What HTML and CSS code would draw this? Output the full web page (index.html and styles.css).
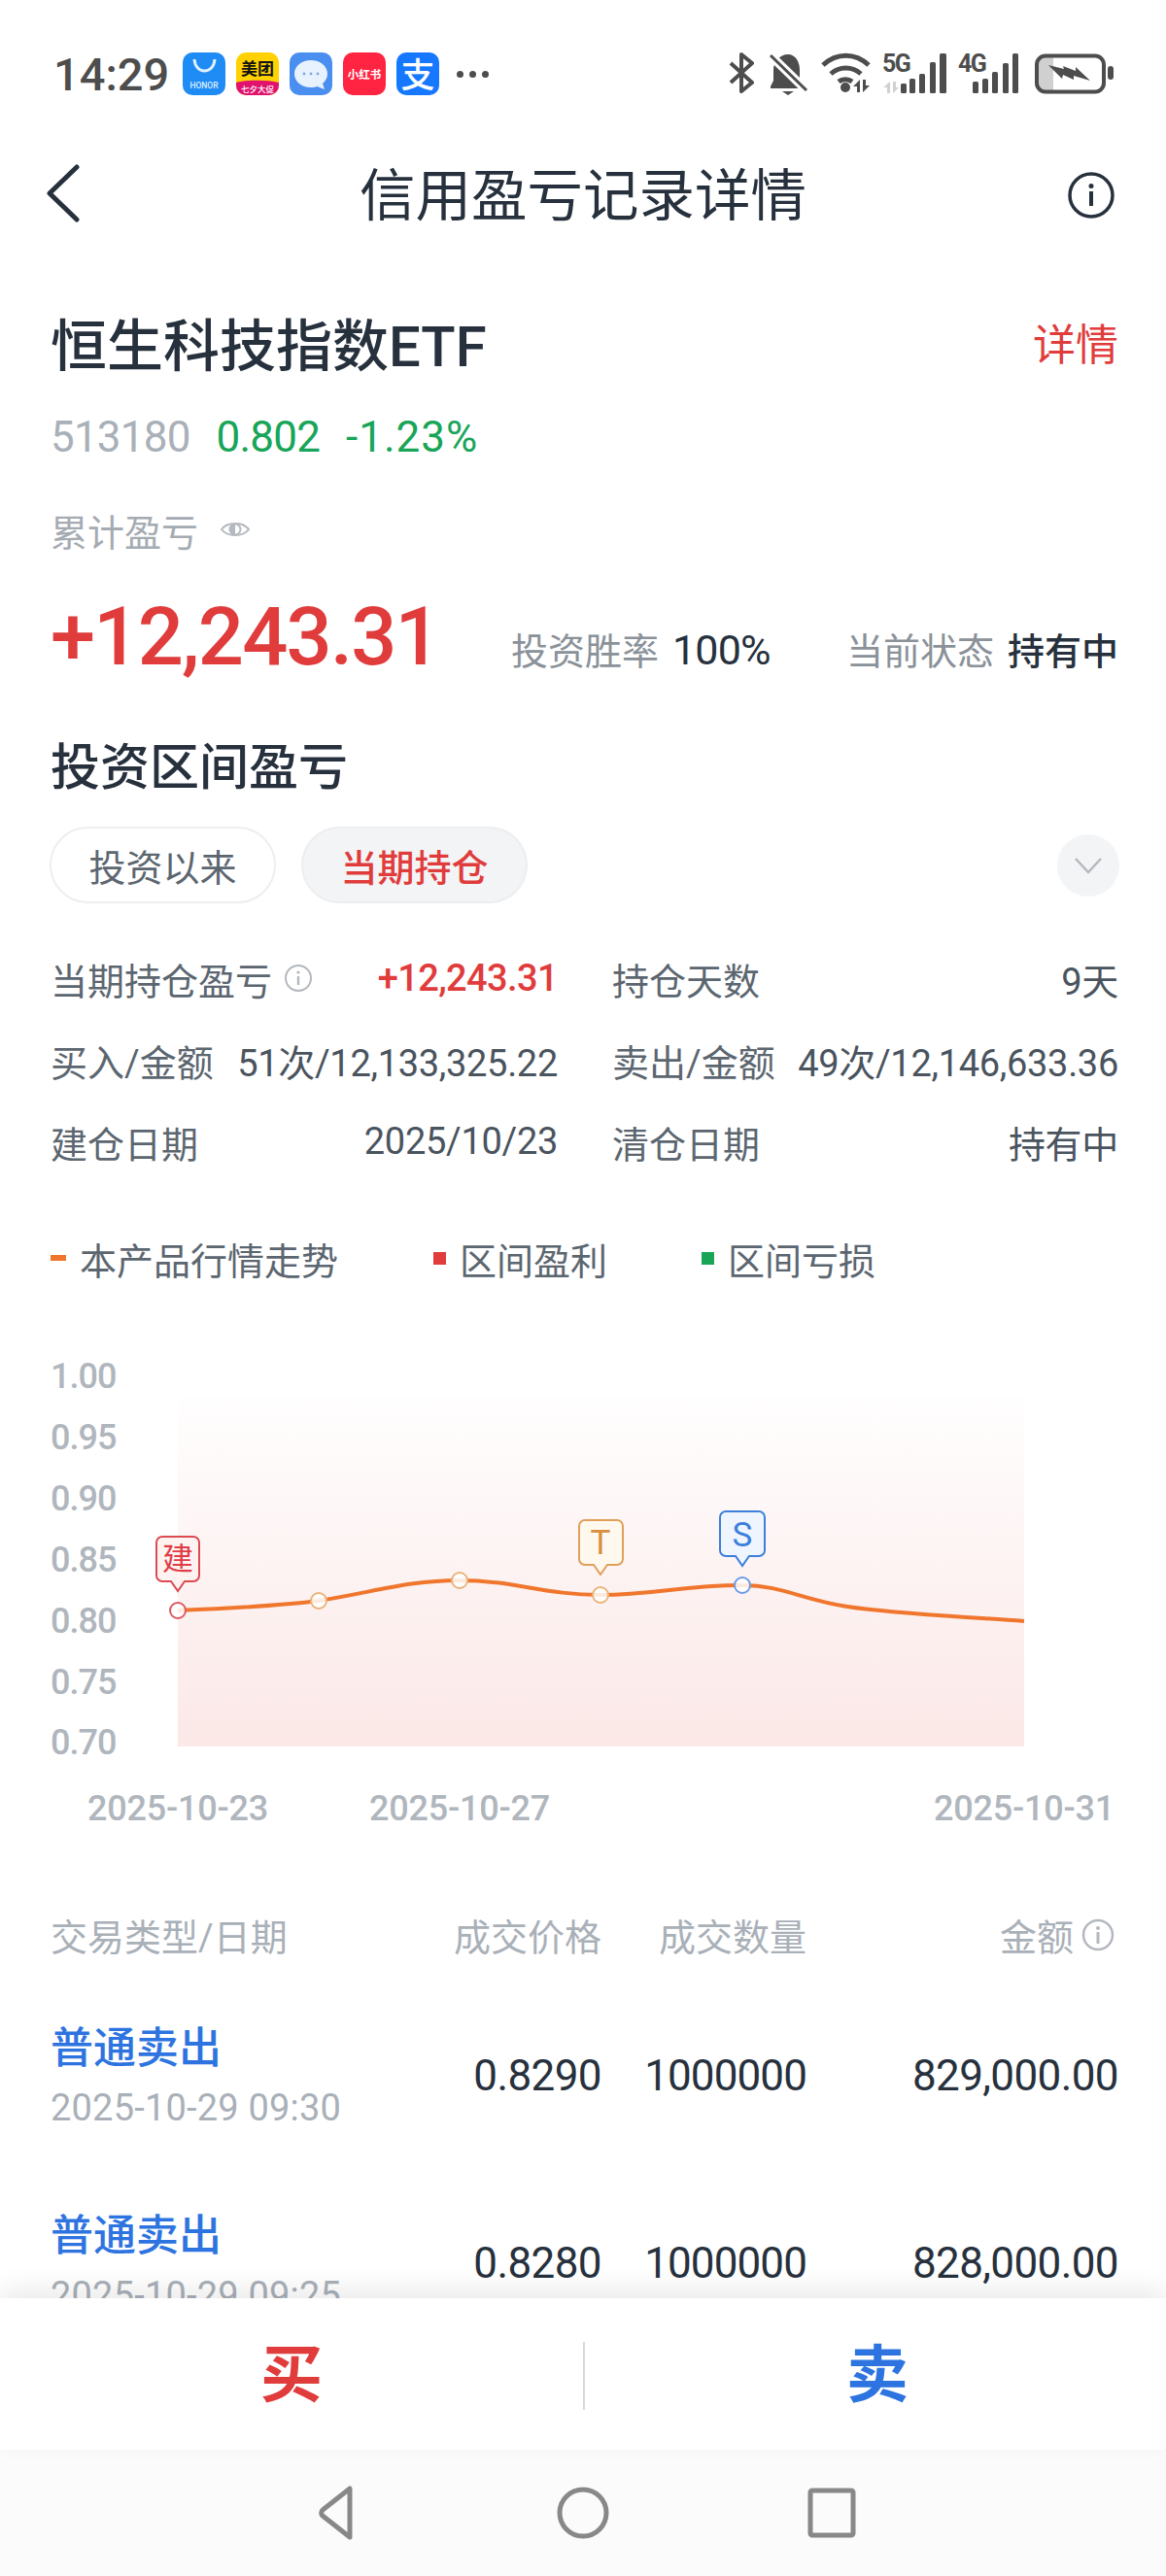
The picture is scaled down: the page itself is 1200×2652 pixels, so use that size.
FILE: index.html
```html
<!DOCTYPE html>
<html>
<head>
    <title>信用盈亏记录详情</title>
    <meta name="viewport" content="width=device-width, initial-scale=1.0">
    <link rel="stylesheet" href="styles.css">
</head>
<body>
    <div class="statusbar">
        <span class="time">14:29</span>
        <div class="apps">
            <svg class="app" viewBox="0 0 44 44">
                <rect width="44" height="44" rx="10" fill="#1f8bf5"/>
                <path d="M12 7c1 16 20 16 21 0" fill="none" stroke="#dff0ff" stroke-width="3"/>
                <text x="22" y="37" class="app-tiny" fill="#dff0ff" text-anchor="middle">HONOR</text>
            </svg>
            <svg class="app" viewBox="0 0 44 44">
                <rect width="44" height="44" rx="10" fill="#ffd100"/>
                <path d="M0 31c12-3 32-3 44 0v3a10 10 0 0 1-10 10H10A10 10 0 0 1 0 34z" fill="#e0126e"/>
                <text x="22" y="23" class="app-label" fill="#111" text-anchor="middle">美团</text>
                <text x="22" y="41" class="app-tiny" fill="#fff" text-anchor="middle">七夕大促</text>
            </svg>
            <svg class="app" viewBox="0 0 44 44">
                <rect width="44" height="44" rx="10" fill="#4a8ef0"/>
                <path d="M22 8c9.500 0 17 6 17 14 0 4-2 7.500-5 10l2 6-7.500-3c-2 .6-4 1-6.500 1C12.500 36 5 30 5 22S12.500 8 22 8z" fill="#e8f2fe"/>
                <circle cx="15" cy="22" r="1.400" fill="#7fa8e4"/>
                <circle cx="22" cy="22" r="1.400" fill="#7fa8e4"/>
                <circle cx="29" cy="22" r="1.400" fill="#7fa8e4"/>
            </svg>
            <svg class="app" viewBox="0 0 44 44">
                <rect width="44" height="44" rx="10" fill="#ff2442"/>
                <text x="22" y="27" class="app-label app-label-small" fill="#fff" text-anchor="middle">小红书</text>
            </svg>
            <svg class="app" viewBox="0 0 44 44">
                <rect width="44" height="44" rx="10" fill="#1677ff"/>
                <text x="22" y="36" class="app-big" fill="#fff" text-anchor="middle">支</text>
            </svg>
        </div>
        <span class="more"><i></i><i></i><i></i></span>
        <svg class="status-icons" viewBox="750 50 402 54">
            <!-- bluetooth -->
            <path d="M755 66l22 20-11 9V57l11 9-22 20" fill="none" stroke="#4d4d4d" stroke-width="4" stroke-linejoin="round"/>
            <!-- bell -->
            <path d="M814 57c8 0 12 8 12 16v11l4 6v2h-34v-2l3-6V73c0-8 6-16 15-16z" fill="#4d4d4d"/>
            <path d="M808 95h12l-6 4z" fill="#4d4d4d"/>
            <path d="M795 57l38 37" stroke="#fff" stroke-width="9"/>
            <path d="M796 58l37 36" stroke="#4d4d4d" stroke-width="3"/>
            <!-- wifi -->
            <path d="M850 68c14-13 33-13 47 0M858 77c9-8 22-8 31 0M866 85c4-3 10-3 14 0" fill="none" stroke="#4d4d4d" stroke-width="5"/>
            <circle cx="873" cy="91" r="5" fill="#4d4d4d"/>
            <path d="M888 83v13h-3v-6h-4zM891 83h3v6h4l-7 7z" fill="#4d4d4d"/>
            <!-- 5G -->
            <text x="911" y="75" class="net-label">5G</text>
            <path d="M919 85v12h-3v-6h-4zM922 85h3v6h3l-6 6z" fill="#d0d0d0"/>
            <g fill="#4d4d4d">
                <rect x="930" y="87" width="6" height="10" rx="1.500"/>
                <rect x="939" y="82" width="6" height="15" rx="1.500"/>
                <rect x="949" y="77" width="6" height="20" rx="1.500"/>
                <rect x="960" y="65" width="6" height="32" rx="1.500"/>
                <rect x="970" y="56" width="7" height="41" rx="1.500"/>
            </g>
            <!-- 4G -->
            <text x="989" y="75" class="net-label">4G</text>
            <g fill="#4d4d4d">
                <rect x="1004" y="85" width="6" height="12" rx="1.500"/>
                <rect x="1014" y="82" width="6" height="15" rx="1.500"/>
                <rect x="1024" y="75" width="6" height="22" rx="1.500"/>
                <rect x="1035" y="66" width="6" height="31" rx="1.500"/>
                <rect x="1045" y="56" width="6" height="41" rx="1.500"/>
            </g>
            <!-- battery -->
            <path d="M1078 59h9v36h-9a7 7 0 0 1-7-7V66a7 7 0 0 1 7-7z" fill="#d0d0d0"/>
            <rect x="1070" y="58.500" width="69" height="37" rx="9" fill="none" stroke="#4d4d4d" stroke-width="4"/>
            <rect x="1143" y="69" width="6" height="14" rx="3" fill="#4d4d4d"/>
            <path d="M1082 68l16 4-1-3 13 5v-4l15 14-17-5v4l-11-5-1 4z" fill="#4d4d4d"/>
        </svg>
    </div>

    <div class="navbar">
        <svg class="nav-back" viewBox="0 0 36 60"><path d="M32 3L4 30l28 27" fill="none" stroke="#27313d" stroke-width="5" stroke-linecap="round" stroke-linejoin="round"/></svg>
        <h1 class="nav-title">信用盈亏记录详情</h1>
        <svg class="nav-info" viewBox="0 0 48 48">
            <circle cx="24" cy="24" r="22" fill="none" stroke="#27313d" stroke-width="3.500"/>
            <circle cx="24" cy="14.500" r="2.500" fill="#27313d"/>
            <rect x="22" y="20" width="4" height="15" fill="#27313d"/>
        </svg>
    </div>

    <div class="main">
        <div class="stock-head">
            <span class="stock-name">恒生科技指数ETF</span>
            <span class="stock-link">详情</span>
        </div>
        <div class="quote">
            <span class="quote-code">513180</span>
            <span class="green">0.802</span>
            <span class="green quote-rate">-1.23%</span>
        </div>
        <div class="total-label">
            累计盈亏
            <svg class="eye" viewBox="0 0 32 22">
                <path d="M2 11C8 3 24 3 30 11 24 19 8 19 2 11z" fill="none" stroke="#b4b9bf" stroke-width="2"/>
                <circle cx="16" cy="11" r="5.500" fill="none" stroke="#b4b9bf" stroke-width="2"/>
                <path d="M16 5.500a5.500 5.500 0 0 0 0 11z" fill="#b4b9bf"/>
            </svg>
        </div>
        <div class="total-row">
            <span class="total-value">+12,243.31</span>
            <span class="total-meta"><em>投资胜率</em><b class="meta-num">100%</b></span>
            <span class="total-meta"><em>当前状态</em><b>持有中</b></span>
        </div>

        <h2 class="section-title">投资区间盈亏</h2>
        <div class="tabs">
            <button class="tab">投资以来</button>
            <button class="tab active">当期持仓</button>
            <span class="tab-more">
                <svg viewBox="0 0 30 18"><path d="M2 2l13 14L28 2" fill="none" stroke="#b4b9bf" stroke-width="2.500"/></svg>
            </span>
        </div>

        <div class="stats">
            <div class="stat">
                <span class="stat-label">当期持仓盈亏
                    <svg class="info-small" viewBox="0 0 30 30">
                        <circle cx="15" cy="15" r="13" fill="none" stroke="#b4b9bf" stroke-width="2"/>
                        <circle cx="15" cy="9" r="1.600" fill="#b4b9bf"/>
                        <rect x="13.800" y="13" width="2.400" height="9" fill="#b4b9bf"/>
                    </svg>
                </span>
                <span class="stat-value red">+12,243.31</span>
            </div>
            <div class="stat"><span class="stat-label">持仓天数</span><span class="stat-value">9天</span></div>
            <div class="stat"><span class="stat-label">买入/金额</span><span class="stat-value">51次/12,133,325.22</span></div>
            <div class="stat"><span class="stat-label">卖出/金额</span><span class="stat-value">49次/12,146,633.36</span></div>
            <div class="stat"><span class="stat-label">建仓日期</span><span class="stat-value">2025/10/23</span></div>
            <div class="stat"><span class="stat-label">清仓日期</span><span class="stat-value">持有中</span></div>
        </div>

        <div class="legend">
            <span class="legend-item legend-line">本产品行情走势</span>
            <span class="legend-item legend-profit">区间盈利</span>
            <span class="legend-item legend-loss">区间亏损</span>
        </div>

        <svg class="chart" viewBox="52 1390 1100 500">
            <defs>
                <linearGradient id="area" x1="0" y1="0" x2="0" y2="1">
                    <stop offset="0" stop-color="#fffefe"/>
                    <stop offset="1" stop-color="#fbe8e7"/>
                </linearGradient>
            </defs>
            <g class="axis-y">
                <text x="52" y="1428">1.00</text>
                <text x="52" y="1491">0.95</text>
                <text x="52" y="1554">0.90</text>
                <text x="52" y="1617">0.85</text>
                <text x="52" y="1680">0.80</text>
                <text x="52" y="1743">0.75</text>
                <text x="52" y="1805">0.70</text>
            </g>
            <rect x="183" y="1437" width="871" height="360" fill="url(#area)"/>
            <path class="trend" d="M183 1657C230 1655 290 1652 328 1647C385 1638 420 1626 473 1626C530 1626 560 1641 618 1641C675 1641 700 1631 764 1631C805 1631 825 1646 872 1653C925 1661 990 1663 1054 1668"/>
            <circle class="dot" cx="183" cy="1657" r="8" stroke="#dc5a60"/>
            <circle class="dot" cx="328" cy="1647" r="8" stroke="#e9b57a"/>
            <circle class="dot" cx="473" cy="1626" r="8" stroke="#e9b57a"/>
            <circle class="dot" cx="618" cy="1641" r="8" stroke="#e9b57a"/>
            <circle class="dot" cx="764" cy="1631" r="8" stroke="#6c9be6"/>

            <path d="M167 1581h32a6 6 0 0 1 6 6v34a6 6 0 0 1-6 6h-9l-7 10-7-10h-9a6 6 0 0 1-6-6v-34a6 6 0 0 1 6-6z" fill="#fff3f2" stroke="#dc4a52" stroke-width="2"/>
            <text x="183" y="1615" class="pin-text" fill="#e03c45">建</text>
            <path d="M602 1564h33a6 6 0 0 1 6 6v34a6 6 0 0 1-6 6h-10l-7 10-7-10h-9a6 6 0 0 1-6-6v-34a6 6 0 0 1 6-6z" fill="#fff8ef" stroke="#e0a05a" stroke-width="2"/>
            <text x="618" y="1599" class="pin-text pin-latin" fill="#d98f3c">T</text>
            <path d="M747 1555h34a6 6 0 0 1 6 6v34a6 6 0 0 1-6 6h-10l-7 10-7-10h-10a6 6 0 0 1-6-6v-34a6 6 0 0 1 6-6z" fill="#eef5ff" stroke="#3c7fdc" stroke-width="2"/>
            <text x="764" y="1591" class="pin-text pin-latin" fill="#3c7fdc">S</text>

            <g class="axis-x">
                <text x="183" y="1873">2025-10-23</text>
                <text x="473" y="1873">2025-10-27</text>
                <text x="1054" y="1873">2025-10-31</text>
            </g>
        </svg>

        <div class="trade-table">
            <div class="trade-head">
                <span>交易类型/日期</span>
                <span class="cell-right">成交价格</span>
                <span class="cell-right">成交数量</span>
                <span class="cell-right cell-amount">金额
                    <svg class="info-amount" viewBox="0 0 34 34">
                        <circle cx="17" cy="17" r="15" fill="none" stroke="#b4b9bf" stroke-width="2.500"/>
                        <circle cx="17" cy="10" r="2" fill="#b4b9bf"/>
                        <rect x="15.500" y="14" width="3" height="12" fill="#b4b9bf"/>
                    </svg>
                </span>
            </div>
            <div class="trade-row">
                <div>
                    <div class="trade-type">普通卖出</div>
                    <div class="trade-date">2025-10-29 09:30</div>
                </div>
                <span class="cell-right">0.8290</span>
                <span class="cell-right cell-qty">1000000</span>
                <span class="cell-right">829,000.00</span>
            </div>
            <div class="trade-row">
                <div>
                    <div class="trade-type">普通卖出</div>
                    <div class="trade-date">2025-10-29 09:25</div>
                </div>
                <span class="cell-right">0.8280</span>
                <span class="cell-right cell-qty">1000000</span>
                <span class="cell-right">828,000.00</span>
            </div>
        </div>
    </div>

    <div class="trade-bar">
        <button class="trade-btn buy">买</button>
        <button class="trade-btn sell">卖</button>
    </div>
    <div class="sysnav">
        <svg viewBox="0 0 60 60"><path d="M52 5v50L24 33a4 4 0 0 1 0-6z" fill="none" stroke="#888" stroke-width="5" stroke-linejoin="round" transform="translate(-6 0)"/></svg>
        <svg viewBox="0 0 60 60"><circle cx="30" cy="30" r="24" fill="none" stroke="#888" stroke-width="5"/></svg>
        <svg viewBox="0 0 60 60"><rect x="8" y="7" width="44" height="46" rx="2" fill="none" stroke="#888" stroke-width="5"/></svg>
    </div>
</body>
</html>
```

FILE: styles.css
```css
* {
    box-sizing: border-box;
}
body {
    margin: 0;
    width: 1200px;
    height: 2652px;
    overflow: hidden;
    display: flex;
    flex-direction: column;
    background-color: #fff;
    color: #27313d;
    font-family: Roboto, "Noto Sans CJK SC", sans-serif;
}
button {
    font-family: inherit;
    border: none;
    background: none;
    padding: 0;
}
em {
    font-style: normal;
}

/* status bar */
.statusbar {
    flex: none;
    height: 152px;
    display: flex;
    align-items: center;
    padding: 0 51px 0 55px;
}
.time {
    width: 133px;
    font-size: 47px;
    font-weight: 500;
    color: #4d4d4d;
}
.apps {
    display: flex;
    gap: 11px;
}
.app {
    width: 44px;
    height: 44px;
}
.app-label {
    font-size: 17px;
    font-weight: 700;
}
.app-label-small {
    font-size: 11.500px;
}
.app-tiny {
    font-size: 8.500px;
    font-weight: 500;
}
.app-big {
    font-size: 35px;
    font-weight: 500;
}
.more {
    display: flex;
    gap: 6px;
    margin-left: 18px;
}
.more i {
    width: 7px;
    height: 7px;
    border-radius: 50%;
    background-color: #4d4d4d;
}
.status-icons {
    width: 402px;
    height: 54px;
    margin-left: auto;
}
.net-label {
    font-size: 25px;
    font-weight: 700;
    letter-spacing: -1.500px;
    fill: #4d4d4d;
}

/* title bar */
.navbar {
    flex: none;
    height: 94px;
    position: relative;
    display: flex;
    align-items: center;
    justify-content: center;
}
.nav-title {
    margin: -4px 0 0;
    font-size: 57.5px;
    font-weight: 400;
}
.nav-back {
    position: absolute;
    left: 47px;
    top: 17px;
    width: 36px;
    height: 60px;
}
.nav-info {
    position: absolute;
    right: 53px;
    top: 25px;
    width: 48px;
    height: 48px;
}

/* scrolling content */
.main {
    flex: 1;
    min-height: 0;
    overflow: hidden;
    padding: 66px 49px 0 52px;
}
.stock-head {
    display: flex;
    justify-content: space-between;
    align-items: center;
    height: 80px;
}
.stock-name {
    font-size: 58px;
    font-weight: 500;
}
.stock-link {
    font-size: 44px;
    color: #e03c3c;
}
.quote {
    display: flex;
    gap: 27px;
    align-items: center;
    height: 50px;
    margin-top: 33px;
    font-size: 44px;
    letter-spacing: -0.8px;
}
.quote-code {
    color: #a9b0b8;
}
.quote-rate {
    letter-spacing: 1px;
}
.green {
    color: #18a558;
}
.red {
    color: #e03c3c;
}
.total-label {
    display: flex;
    align-items: center;
    gap: 22px;
    height: 50px;
    margin-top: 45px;
    font-size: 38px;
    color: #a5abb2;
}
.eye {
    width: 32px;
    height: 22px;
}
.total-row {
    display: flex;
    align-items: baseline;
    height: 100px;
    margin-top: 37px;
}
.total-value {
    font-size: 83px;
    font-weight: 500;
    letter-spacing: -1.800px;
    color: #e03c3c;
    margin-right: 74px;
}
.total-meta {
    font-size: 38px;
    color: #8a9199;
}
.total-meta + .total-meta {
    margin-left: auto;
}
.total-meta b {
    margin-left: 14px;
    font-weight: 500;
    color: #27313d;
}
.total-meta .meta-num {
    font-size: 43px;
    font-weight: 400;
    letter-spacing: -0.8px;
}
.section-title {
    height: 70px;
    line-height: 70px;
    margin: 49px 0 0;
    font-size: 51px;
    font-weight: 500;
}
.tabs {
    display: flex;
    align-items: center;
    gap: 26px;
    height: 79px;
    margin: 25px -1px 0 -1px;
}
.tab {
    width: 233px;
    height: 79px;
    border: 2px solid #eceef0;
    border-radius: 40px;
    background-color: #fff;
    color: #5c6670;
    font-size: 38px;
}
.tab.active {
    background-color: #f3f4f6;
    color: #e03c3c;
    font-weight: 500;
}
.tab-more {
    width: 64px;
    height: 64px;
    margin-left: auto;
    border-radius: 50%;
    background-color: #f3f4f6;
    display: flex;
    align-items: center;
    justify-content: center;
}
.tab-more svg {
    width: 30px;
    height: 18px;
}

.stats {
    display: grid;
    grid-template-columns: 522px 521px;
    grid-auto-rows: 84px;
    column-gap: 56px;
    margin-top: 35px;
}
.stat {
    display: flex;
    align-items: center;
    justify-content: space-between;
    font-size: 38px;
}
.stat-label {
    display: flex;
    align-items: center;
    gap: 12px;
    color: #5c6670;
}
.stat-value {
    font-size: 38px;
    letter-spacing: -0.3px;
    color: #4a545e;
}
.stat-value.red {
    color: #e03c3c;
    font-weight: 500;
    letter-spacing: -0.6px;
}
.info-small {
    width: 30px;
    height: 30px;
}

.legend {
    display: flex;
    align-items: center;
    height: 50px;
    margin-top: 53px;
    font-size: 38px;
    color: #5c6670;
}
.legend-item {
    display: flex;
    align-items: center;
}
.legend-item::before {
    content: "";
    margin-right: 14px;
}
.legend-line {
    margin-right: 98px;
}
.legend-line::before {
    width: 16px;
    height: 6px;
    background-color: #f0762d;
}
.legend-profit {
    margin-right: 97px;
}
.legend-profit::before {
    width: 13px;
    height: 13px;
    background-color: #e03c3c;
}
.legend-loss::before {
    width: 13px;
    height: 13px;
    background-color: #18a558;
}

/* chart, coordinates in the viewBox are page pixels */
.chart {
    display: block;
    width: 1100px;
    height: 500px;
    margin-top: 71px;
}
.chart text {
    font-family: Roboto, "Noto Sans CJK SC", sans-serif;
}
.axis-y text, .axis-x text {
    font-size: 36px;
    font-weight: 500;
    fill: #b0b6bd;
}
.axis-y text {
    letter-spacing: -1px;
}
.axis-x text {
    text-anchor: middle;
    letter-spacing: -0.2px;
}
.trend {
    fill: none;
    stroke: #f0762d;
    stroke-width: 4;
}
.dot {
    fill: #fff;
    fill-opacity: 0.85;
    stroke-width: 2;
}
.pin-text {
    font-size: 32px;
    text-anchor: middle;
}
.pin-text.pin-latin {
    font-size: 35px;
}

.trade-table {
    margin-top: 73px;
}
.trade-head, .trade-row {
    display: grid;
    grid-template-columns: 397px 170px 211px 321px;
    align-items: center;
}
.trade-head {
    height: 50px;
    font-size: 38px;
    color: #a9b0b8;
}
.cell-right {
    text-align: right;
}
.cell-qty {
    letter-spacing: -0.9px;
}
.cell-amount {
    display: flex;
    justify-content: flex-end;
    align-items: center;
    gap: 8px;
}
.info-amount {
    width: 34px;
    height: 34px;
    margin-right: 4px;
}
.trade-row {
    height: 118px;
    margin-top: 64px;
    font-size: 44px;
    letter-spacing: -0.6px;
}
.trade-row + .trade-row {
    margin-top: 75px;
}
.trade-type {
    height: 60px;
    line-height: 60px;
    font-size: 44px;
    font-weight: 500;
    letter-spacing: 0;
    color: #2d74e0;
}
.trade-date {
    height: 50px;
    line-height: 50px;
    margin-top: 6px;
    font-size: 38px;
    letter-spacing: 0.2px;
    color: #a9b0b8;
}

/* bottom actions */
.trade-bar {
    flex: none;
    height: 156px;
    position: relative;
    display: flex;
    align-items: center;
    padding-top: 4px;
    background-color: #fff;
    box-shadow: 0 -10px 24px rgba(0, 0, 0, 0.08);
}
.trade-btn {
    height: 70px;
    font-size: 64px;
    font-weight: 700;
    line-height: 70px;
}
.buy {
    width: 602px;
    color: #e03c3c;
    border-right: 2px solid #d8d8d8;
}
.sell {
    flex: 1;
    color: #2d74e0;
    padding-left: 4px;
}
.sysnav {
    flex: none;
    height: 130px;
    display: flex;
    align-items: center;
    justify-content: center;
    gap: 196px;
    background-color: #fbfbfb;
}
.sysnav svg {
    width: 60px;
    height: 60px;
}
```
